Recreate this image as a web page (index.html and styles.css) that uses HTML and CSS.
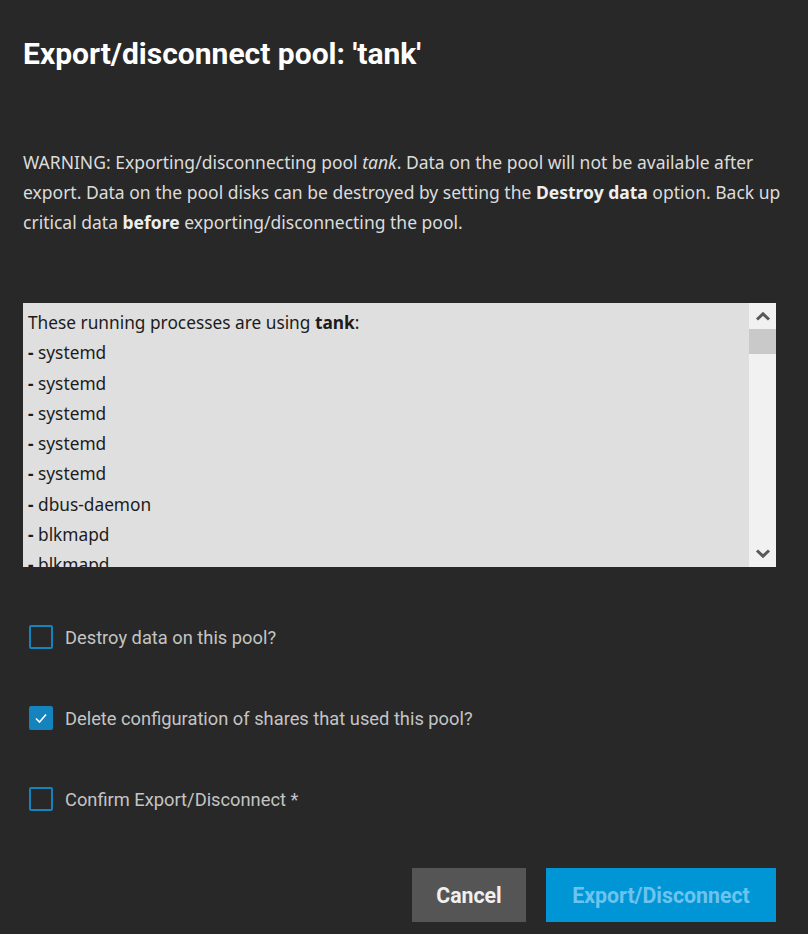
FILE: index.html
```html
<!DOCTYPE html>
<html>
<head>
<meta charset="utf-8">
<link rel="stylesheet" href="styles.css">
</head>
<body>
<div class="dialog">
  <h1 class="title">Export/disconnect pool: 'tank'</h1>
  <p class="warning">WARNING: Exporting/disconnecting pool <i>tank</i>. Data on the pool will not be available after export. Data on the pool disks can be destroyed by setting the <b>Destroy data</b> option. Back up critical data <b>before</b> exporting/disconnecting the pool.</p>
  <div class="procbox">
    <div class="proclist">
      <div class="line">These running processes are using <b>tank</b>:</div>
      <div class="line"><b>-</b> systemd</div>
      <div class="line"><b>-</b> systemd</div>
      <div class="line"><b>-</b> systemd</div>
      <div class="line"><b>-</b> systemd</div>
      <div class="line"><b>-</b> systemd</div>
      <div class="line"><b>-</b> dbus-daemon</div>
      <div class="line"><b>-</b> blkmapd</div>
      <div class="line"><b>-</b> blkmapd</div>
      <div class="line"><b>-</b> rpcbind</div>
    </div>
    <div class="scrollbar">
      <div class="sb-btn">
        <svg width="16" height="10" viewBox="0 0 16 10"><path d="M2 8.5 L8 2.8 L14 8.5" fill="none" stroke="#595959" stroke-width="3"/></svg>
      </div>
      <div class="sb-thumb"></div>
      <div class="sb-track"></div>
      <div class="sb-btn">
        <svg width="16" height="10" viewBox="0 0 16 10"><path d="M2 1.5 L8 7.2 L14 1.5" fill="none" stroke="#595959" stroke-width="3"/></svg>
      </div>
    </div>
  </div>
  <div class="checks">
    <label class="check"><span class="box"></span><span class="lbl">Destroy data on this pool?</span></label>
    <label class="check"><span class="box checked"><svg width="14" height="12" viewBox="0 0 14 12"><path d="M2 6.5 L5.5 10 L12 2.5" fill="none" stroke="#fff" stroke-width="1.6"/></svg></span><span class="lbl">Delete configuration of shares that used this pool?</span></label>
    <label class="check"><span class="box"></span><span class="lbl">Confirm Export/Disconnect *</span></label>
  </div>
  <div class="actions">
    <button class="btn cancel">Cancel</button>
    <button class="btn primary">Export/Disconnect</button>
  </div>
</div>
</body>
</html>
```
FILE: styles.css
```css
html, body {
  margin: 0;
  padding: 0;
  background: #282828;
}
.dialog {
  padding: 0 32px 0 23px;
  height: 934px;
  box-sizing: border-box;
  display: flex;
  flex-direction: column;
}
.title {
  font-family: Roboto, "Liberation Sans", sans-serif;
  font-weight: 700;
  font-size: 30px;
  color: #fff;
  margin: 36px 0 0 0;
  line-height: 36px;
}
.warning {
  font-family: "Noto Sans", "Open Sans", sans-serif;
  font-size: 17.5px;
  line-height: 30px;
  color: #dcdcdc;
  margin: 75px -12px 0 0;
}
.warning b { font-weight: 700; color: #eee; }
.procbox {
  margin-top: 66px;
  height: 264px;
  display: flex;
  background: #dfdfdf;
}
.proclist {
  flex: 1;
  overflow: hidden;
  padding: 5px 5px 0 5px;
  font-family: "Noto Sans", "Open Sans", sans-serif;
  font-size: 17.3px;
  line-height: 30.3px;
  color: #1c1c1c;
}
.proclist b { font-weight: 700; }
.scrollbar {
  width: 27px;
  background: #f1f1f1;
  display: flex;
  flex-direction: column;
}
.sb-btn {
  height: 26px;
  display: flex;
  align-items: center;
  justify-content: center;
}
.sb-thumb {
  height: 25px;
  background: #c9c9c9;
}
.sb-track { flex: 1; }
.checks {
  margin-top: 58px;
  display: flex;
  flex-direction: column;
  gap: 57px;
}
.check {
  display: flex;
  align-items: center;
  gap: 12px;
  padding-left: 6px;
  height: 24px;
}
.box {
  width: 24px;
  height: 24px;
  box-sizing: border-box;
  border: 2px solid #1583bd;
  border-radius: 2px;
  display: flex;
  align-items: center;
  justify-content: center;
}
.box.checked {
  background: #1583bd;
}
.lbl {
  font-family: Roboto, "Liberation Sans", sans-serif;
  font-size: 18.3px;
  color: #c4c4c4;
}
.actions {
  margin-top: auto;
  margin-bottom: 12px;
  display: flex;
  justify-content: flex-end;
  gap: 20px;
}
.btn {
  height: 54px;
  border: none;
  border-radius: 0;
  font-family: Roboto, "Liberation Sans", sans-serif;
  font-weight: 700;
  font-size: 21.3px;
  padding: 0;
}
.cancel {
  width: 114px;
  background: #555555;
  color: #f0f0f0;
}
.primary {
  width: 230px;
  background: #0096d6;
  color: #6cc4ee;
}
```
